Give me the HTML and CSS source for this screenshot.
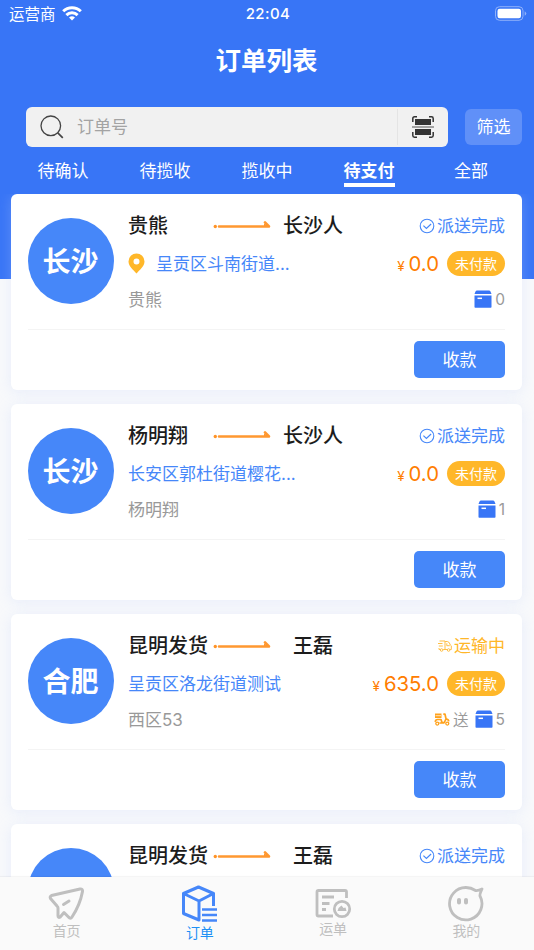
FILE: index.html
```html
<!DOCTYPE html>
<html lang="zh-CN">
<head>
    <meta charset="UTF-8">
    <meta name="viewport" content="width=device-width, initial-scale=1.0">
    <title>订单列表</title>
    <link rel="stylesheet" href="styles.css">
</head>
<body>
    <!-- shared icons -->
    <svg class="sprite" aria-hidden="true">
        <symbol id="icon-arrow" viewBox="0 0 58 10">
            <circle cx="2.300" cy="6.500" r="1.700" fill="#ff9326"/>
            <path d="M6 6.500h50L52 2.400" fill="none" stroke="#ff9830" stroke-width="2.600" stroke-linecap="round" stroke-linejoin="round"/>
            <path d="M51 3.500L56.500 6.500H51z" fill="#ff9830"/>
        </symbol>
        <symbol id="icon-check" viewBox="0 0 16 16">
            <circle cx="8" cy="8" r="6.800" fill="none" stroke="#4687f9" stroke-width="1.100"/>
            <path d="M4.400 7.600l3 2.800 4.700-4.400" fill="none" stroke="#4687f9" stroke-width="1.200"/>
        </symbol>
        <symbol id="icon-box" viewBox="0 0 18 18">
            <path d="M3 .5h12q1 0 1.500 1L17.500 4H.5l1-2.500Q2 .5 3 .5zM.5 5.500h17v11.500q0 .8-.8.8H1.300q-.8 0-.8-.8z" fill="#3875f6"/>
            <path d="M3.500 8.300h4.500" stroke="#fff" stroke-width="1.500"/>
        </symbol>
        <symbol id="icon-pin" viewBox="0 0 17 21">
            <path d="M8.500.5a8 8 0 0 0-8 8c0 5 5 8.500 8 12 3-3.500 8-7 8-12a8 8 0 0 0-8-8zm0 5a3 3 0 1 1 0 6 3 3 0 0 1 0-6z" fill="#ffb729" fill-rule="evenodd"/>
        </symbol>
        <symbol id="icon-truck" viewBox="0 0 14 12">
            <g fill="none" stroke="#ffbf45" stroke-width="1">
                <path d="M1.500 1h5.500v8.500H5.200M0 3.500h4.500M.8 6h4M1 8v1.500h1M7 1.500h2.300q2.300.3 3 3.500l1 .8v3.700h-1.200M9 9.500H7M8.800 3.300v2.400h3"/>
                <circle cx="3.600" cy="10" r="1.300"/>
                <circle cx="10.600" cy="10" r="1.300"/>
            </g>
        </symbol>
        <symbol id="icon-scooter" viewBox="0 0 16 13">
            <path d="M1 .5h6.500v4.500H1z" fill="#ffa21c"/>
            <path d="M1.500 2.700h5.500" stroke="#fff" stroke-width=".7"/>
            <path d="M1.200 8.800Q1.500 6.500 3.500 6.500H7l1 3h2.300l1.700-3.700L11 1.200H9.300M12 5.800q2.500.4 2.800 2.500M5.500 10h5" fill="none" stroke="#ffa21c" stroke-width="1.700" stroke-linejoin="round"/>
            <circle cx="3.300" cy="10.600" r="1.500" fill="#fff" stroke="#ffa21c" stroke-width="1.300"/>
            <circle cx="13.300" cy="10.600" r="1.500" fill="#fff" stroke="#ffa21c" stroke-width="1.300"/>
        </symbol>
    </svg>

    <div class="page">
        <div class="status-bar">
            <div class="carrier">
                <span>运营商</span>
                <svg class="wifi" viewBox="0 0 20 15">
                    <g fill="none" stroke="#fff" stroke-width="3">
                        <path d="M1.200 5.300a12.600 12.600 0 0 1 17.600 0"/>
                        <path d="M4.400 9.100a8 8 0 0 1 11.200 0"/>
                    </g>
                    <path d="M10 14.500l-3-3q3-2.400 6 0z" fill="#fff"/>
                </svg>
            </div>
            <span class="time">22:04</span>
            <svg class="battery" viewBox="0 0 32 15">
                <rect x=".5" y=".7" width="27.500" height="13.600" rx="4" fill="none" stroke="#8fb1fa"/>
                <rect x="2.500" y="2.700" width="23.500" height="9.600" rx="2.200" fill="#fff"/>
                <path d="M29.700 5.200q3.200 2.300 0 4.600z" fill="#8fb1fa"/>
            </svg>
        </div>

        <h1 class="title">订单列表</h1>

        <div class="search-row">
            <div class="search-box">
                <svg class="search-icon" viewBox="0 0 24 24">
                    <g fill="none" stroke="#444" stroke-width="1.300">
                        <circle cx="10.800" cy="10.800" r="9.800"/>
                        <path d="M17.800 17.800l5 5" stroke-width="1.700"/>
                    </g>
                </svg>
                <span class="placeholder">订单号</span>
                <div class="scan">
                    <svg viewBox="0 0 22 22">
                        <path d="M.8 6V2.500Q.8.8 2.500.8H5M17 .8h2.500q1.700 0 1.700 1.700V6M.8 16v3.500q0 1.700 1.700 1.700H5M17 21.200h2.500q1.700 0 1.700-1.700V16" fill="none" stroke="#333" stroke-width="1.500"/>
                        <path d="M3 3h16v6H3zM3 13h16v6H3z" fill="#333"/>
                        <path d="M0 11h22" stroke="#777" stroke-width="1.300"/>
                    </svg>
                </div>
            </div>
            <button class="filter-btn">筛选</button>
        </div>

        <div class="tabs">
            <div class="tab"><span>待确认</span></div>
            <div class="tab"><span>待揽收</span></div>
            <div class="tab"><span>揽收中</span></div>
            <div class="tab active"><span>待支付</span></div>
            <div class="tab"><span>全部</span></div>
        </div>

        <div class="order-list">
            <div class="card">
                <div class="card-body">
                    <div class="city">长沙</div>
                    <div class="info">
                        <div class="row row-name">
                            <span class="sender">贵熊</span>
                            <svg class="arrow"><use href="#icon-arrow"/></svg>
                            <span class="receiver">长沙人</span>
                            <div class="status done"><svg class="check"><use href="#icon-check"/></svg>派送完成</div>
                        </div>
                        <div class="row row-address">
                            <svg class="pin"><use href="#icon-pin"/></svg>
                            <span class="address">呈贡区斗南街道...</span>
                            <div class="price"><small>¥</small>0.0</div>
                            <span class="badge">未付款</span>
                        </div>
                        <div class="row row-contact">
                            <span class="contact">贵熊</span>
                            <div class="count"><svg class="box"><use href="#icon-box"/></svg>0</div>
                        </div>
                    </div>
                </div>
                <div class="card-footer"><button class="pay-btn">收款</button></div>
            </div>

            <div class="card">
                <div class="card-body">
                    <div class="city">长沙</div>
                    <div class="info">
                        <div class="row row-name">
                            <span class="sender">杨明翔</span>
                            <svg class="arrow"><use href="#icon-arrow"/></svg>
                            <span class="receiver">长沙人</span>
                            <div class="status done"><svg class="check"><use href="#icon-check"/></svg>派送完成</div>
                        </div>
                        <div class="row row-address">
                            <span class="address">长安区郭杜街道樱花...</span>
                            <div class="price"><small>¥</small>0.0</div>
                            <span class="badge">未付款</span>
                        </div>
                        <div class="row row-contact">
                            <span class="contact">杨明翔</span>
                            <div class="count"><svg class="box"><use href="#icon-box"/></svg>1</div>
                        </div>
                    </div>
                </div>
                <div class="card-footer"><button class="pay-btn">收款</button></div>
            </div>

            <div class="card">
                <div class="card-body">
                    <div class="city">合肥</div>
                    <div class="info">
                        <div class="row row-name">
                            <span class="sender">昆明发货</span>
                            <svg class="arrow"><use href="#icon-arrow"/></svg>
                            <span class="receiver">王磊</span>
                            <div class="status moving"><svg class="truck"><use href="#icon-truck"/></svg>运输中</div>
                        </div>
                        <div class="row row-address">
                            <span class="address">呈贡区洛龙街道测试</span>
                            <div class="price"><small>¥</small>635.0</div>
                            <span class="badge">未付款</span>
                        </div>
                        <div class="row row-contact">
                            <span class="contact">西区53</span>
                            <div class="count">
                                <svg class="scooter"><use href="#icon-scooter"/></svg>
                                <span class="send">送</span>
                                <svg class="box"><use href="#icon-box"/></svg>5
                            </div>
                        </div>
                    </div>
                </div>
                <div class="card-footer"><button class="pay-btn">收款</button></div>
            </div>

            <div class="card">
                <div class="card-body">
                    <div class="city">合肥</div>
                    <div class="info">
                        <div class="row row-name">
                            <span class="sender">昆明发货</span>
                            <svg class="arrow"><use href="#icon-arrow"/></svg>
                            <span class="receiver">王磊</span>
                            <div class="status done"><svg class="check"><use href="#icon-check"/></svg>派送完成</div>
                        </div>
                    </div>
                </div>
            </div>
        </div>

        <div class="tabbar">
            <div class="tabbar-item">
                <svg viewBox="0 0 38 38">
                    <g fill="none" stroke="#bfbfbf" stroke-width="3" stroke-linejoin="round" stroke-linecap="round">
                        <path d="M3.500 10.500L32 4q3-.3 2.500 2.500Q32 20 24 32q-1.500 2.500-3.500 0L16 27.500l-4 4.700q-2 .8-2-1.700V23q0-1-1-2L2.500 13.500q-1-2 1-3z"/>
                        <path d="M15.500 19.500L21 16"/>
                    </g>
                </svg>
                <span>首页</span>
            </div>
            <div class="tabbar-item active">
                <svg viewBox="0 0 38 38">
                    <g fill="none" stroke="#4687f9" stroke-width="3" stroke-linejoin="round">
                        <path d="M32.500 21V8.500L17.500 2 2.500 8.500v20L18 35V16L2.500 8.500M18 16L32.500 8.500"/>
                        <path d="M21 24.500h15M21 30h15M21 35.500h15" stroke-width="2.600"/>
                    </g>
                </svg>
                <span>订单</span>
            </div>
            <div class="tabbar-item waybill">
                <svg viewBox="0 0 38 38">
                    <g fill="none" stroke="#bfbfbf" stroke-width="2.800" stroke-linejoin="round">
                        <path d="M32.500 15V9q0-1.500-1.500-1.500H4.500Q3 7.500 3 9v22.500Q3 33 4.500 33H19"/>
                        <path d="M8 14h12M8 20.500h7.500M8 26.500h4"/>
                        <circle cx="28" cy="26" r="7.700"/>
                    </g>
                    <path d="M23.500 28q1-4 4-5.500l2 2.500 2-.5 1 3.500z" fill="#bfbfbf"/>
                </svg>
                <span>运单</span>
            </div>
            <div class="tabbar-item">
                <svg viewBox="0 0 38 38">
                    <path d="M28.500 5.500Q24 2.500 19 2.500A16.200 16.200 0 1 0 33 11Q32.500 9.500 35 4 31.500 5.800 28.500 5.500z" fill="none" stroke="#bfbfbf" stroke-width="2.800" stroke-linejoin="round"/>
                    <path d="M12 15v2.500M19 15v2.500" stroke="#bfbfbf" stroke-width="4" stroke-linecap="round"/>
                </svg>
                <span>我的</span>
            </div>
        </div>
    </div>
</body>
</html>
```
FILE: styles.css
```css
* {
    box-sizing: border-box;
}
body {
    margin: 0;
    font-family: Inter, "Noto Sans CJK SC", sans-serif;
    background-color: #f8f9fb;
}
button {
    border: none;
    padding: 0 0 2px;
    font-family: inherit;
    color: #fff;
}
svg {
    display: block;
    flex-shrink: 0;
}
.sprite {
    display: none;
}
.page {
    display: flex;
    flex-direction: column;
    height: 950px;
    overflow: hidden;
    background: linear-gradient(#3875f6 279px, #f8f9fb 279px);
}

/* Status bar */
.status-bar {
    display: grid;
    grid-template-columns: 1fr auto 1fr;
    align-items: center;
    height: 27px;
    flex-shrink: 0;
    padding: 0 7px 0 9px;
    color: #fff;
    font-size: 15.5px;
}
.carrier {
    display: flex;
    align-items: center;
    gap: 6px;
}
.carrier span {
    padding-bottom: 1px;
}
.wifi {
    width: 20px;
    height: 15px;
}
.time {
    font-size: 15px;
    font-weight: 500;
    letter-spacing: 0.4px;
}
.battery {
    width: 32px;
    height: 15px;
    justify-self: end;
}
.title {
    height: 79px;
    flex-shrink: 0;
    margin: 0;
    padding-right: 1px;
    line-height: 68px;
    font-size: 25.5px;
    font-weight: 700;
    color: #fff;
    text-align: center;
}

/* Search */
.search-row {
    display: flex;
    align-items: center;
    gap: 17px;
    height: 41px;
    flex-shrink: 0;
    padding: 0 12px 0 26px;
}
.search-box {
    display: flex;
    align-items: center;
    flex: 1;
    height: 40px;
    padding-left: 14px;
    background: #f1f1f1;
    border-radius: 6px;
}
.search-icon {
    width: 24px;
    height: 24px;
}
.placeholder {
    flex: 1;
    margin-left: 13px;
    padding-bottom: 2px;
    font-size: 17px;
    color: #a3a3a3;
}
.scan {
    display: flex;
    align-items: center;
    justify-content: center;
    width: 51px;
    height: 36px;
    border-left: 1px solid #e4e4e4;
}
.scan svg {
    width: 22px;
    height: 22px;
}
.filter-btn {
    width: 57px;
    height: 36px;
    font-size: 17px;
    background: #6090f8;
    border-radius: 6px;
}

/* Order tabs */
.tabs {
    display: flex;
    height: 47px;
    flex-shrink: 0;
    padding: 5px 12px 0 12px;
}
.tab {
    flex: 1;
    text-align: center;
    font-size: 17px;
    line-height: 38px;
    color: #fff;
}
.tab span {
    display: inline-block;
    height: 35px;
}
.tab.active span {
    font-weight: 700;
    border-bottom: 4px solid #fff;
}

/* Orders */
.order-list {
    display: flex;
    flex-direction: column;
    flex: 1;
    gap: 14px;
    min-height: 0;
    padding: 0 12px 0 11px;
    overflow: hidden;
}
.card {
    flex: 0 0 196px;
    padding: 0 17px;
    background: #fff;
    border-radius: 6px;
    box-shadow: 0 2px 14px rgba(190, 210, 250, 0.28);
}
.card-body {
    display: flex;
    height: 136px;
    border-bottom: 1px solid #f4f4f4;
}
.city {
    width: 86px;
    height: 86px;
    flex-shrink: 0;
    margin: 24px 14px 0 0;
    padding-right: 1px;
    line-height: 88px;
    font-size: 28px;
    font-weight: 700;
    color: #fff;
    text-align: center;
    background: #4687f9;
    border-radius: 50%;
}
.info {
    flex: 1;
    padding-top: 13px;
    white-space: nowrap;
}
.row {
    display: flex;
    align-items: center;
}
.row-name {
    height: 36px;
    padding-bottom: 2px;
    font-size: 20px;
    font-weight: 500;
    color: #1c1c1c;
}
.sender {
    width: 85px;
}
.arrow {
    width: 58px;
    height: 10px;
    margin-top: 2px;
}
.receiver {
    width: 60px;
    margin-left: 12px;
    text-align: center;
}
.status {
    display: flex;
    align-items: center;
    gap: 2px;
    margin-left: auto;
    font-size: 17px;
    font-weight: 400;
}
.status.done {
    color: #4687f9;
}
.status.moving {
    color: #ffb729;
}
.check {
    width: 16px;
    height: 16px;
    margin-top: 4px;
}
.truck {
    width: 14px;
    height: 12px;
    margin-top: 4px;
}
.row-address {
    height: 40px;
}
.pin {
    width: 17px;
    height: 21px;
    margin-right: 11px;
}
.address {
    padding-bottom: 2px;
    font-size: 17px;
    color: #4687f9;
}
.price {
    margin-left: auto;
    padding-top: 1px;
    font-size: 20.3px;
    color: #ff7d00;
}
.price small {
    margin-right: 4px;
    font-size: 13.5px;
}
.badge {
    width: 58px;
    height: 25px;
    margin-left: 8px;
    line-height: 25px;
    font-size: 14px;
    color: #fff;
    text-align: center;
    background: #ffb729;
    border-radius: 13px;
}
.row-contact {
    height: 32px;
    font-size: 17px;
    color: #999;
}
.contact {
    padding-bottom: 2px;
}
.count {
    display: flex;
    align-items: center;
    margin-left: auto;
    font-size: 15.5px;
}
.box {
    width: 18px;
    height: 18px;
    margin-right: 3px;
}
.scooter {
    width: 16px;
    height: 13px;
    margin-right: 3px;
}
.send {
    margin-right: 6px;
}
.card-footer {
    display: flex;
    justify-content: flex-end;
    padding-top: 11px;
}
.pay-btn {
    width: 91px;
    height: 37px;
    font-size: 17px;
    background: #4687f9;
    border-radius: 5px;
}

/* Bottom tab bar */
.tabbar {
    display: flex;
    height: 73px;
    flex-shrink: 0;
    padding-right: 1px;
    background: #fafafa;
    box-shadow: 0 -1px 1px rgba(0, 0, 0, 0.04);
}
.tabbar-item {
    display: flex;
    flex-direction: column;
    align-items: center;
    flex: 1;
    padding-top: 8px;
    font-size: 14px;
    line-height: 16px;
    color: #bfbfbf;
}
.tabbar-item svg {
    width: 38px;
    height: 38px;
}
.tabbar-item.active {
    line-height: 19px;
    color: #1e90f5;
}
.tabbar-item.waybill {
    padding-top: 6px;
}
```
